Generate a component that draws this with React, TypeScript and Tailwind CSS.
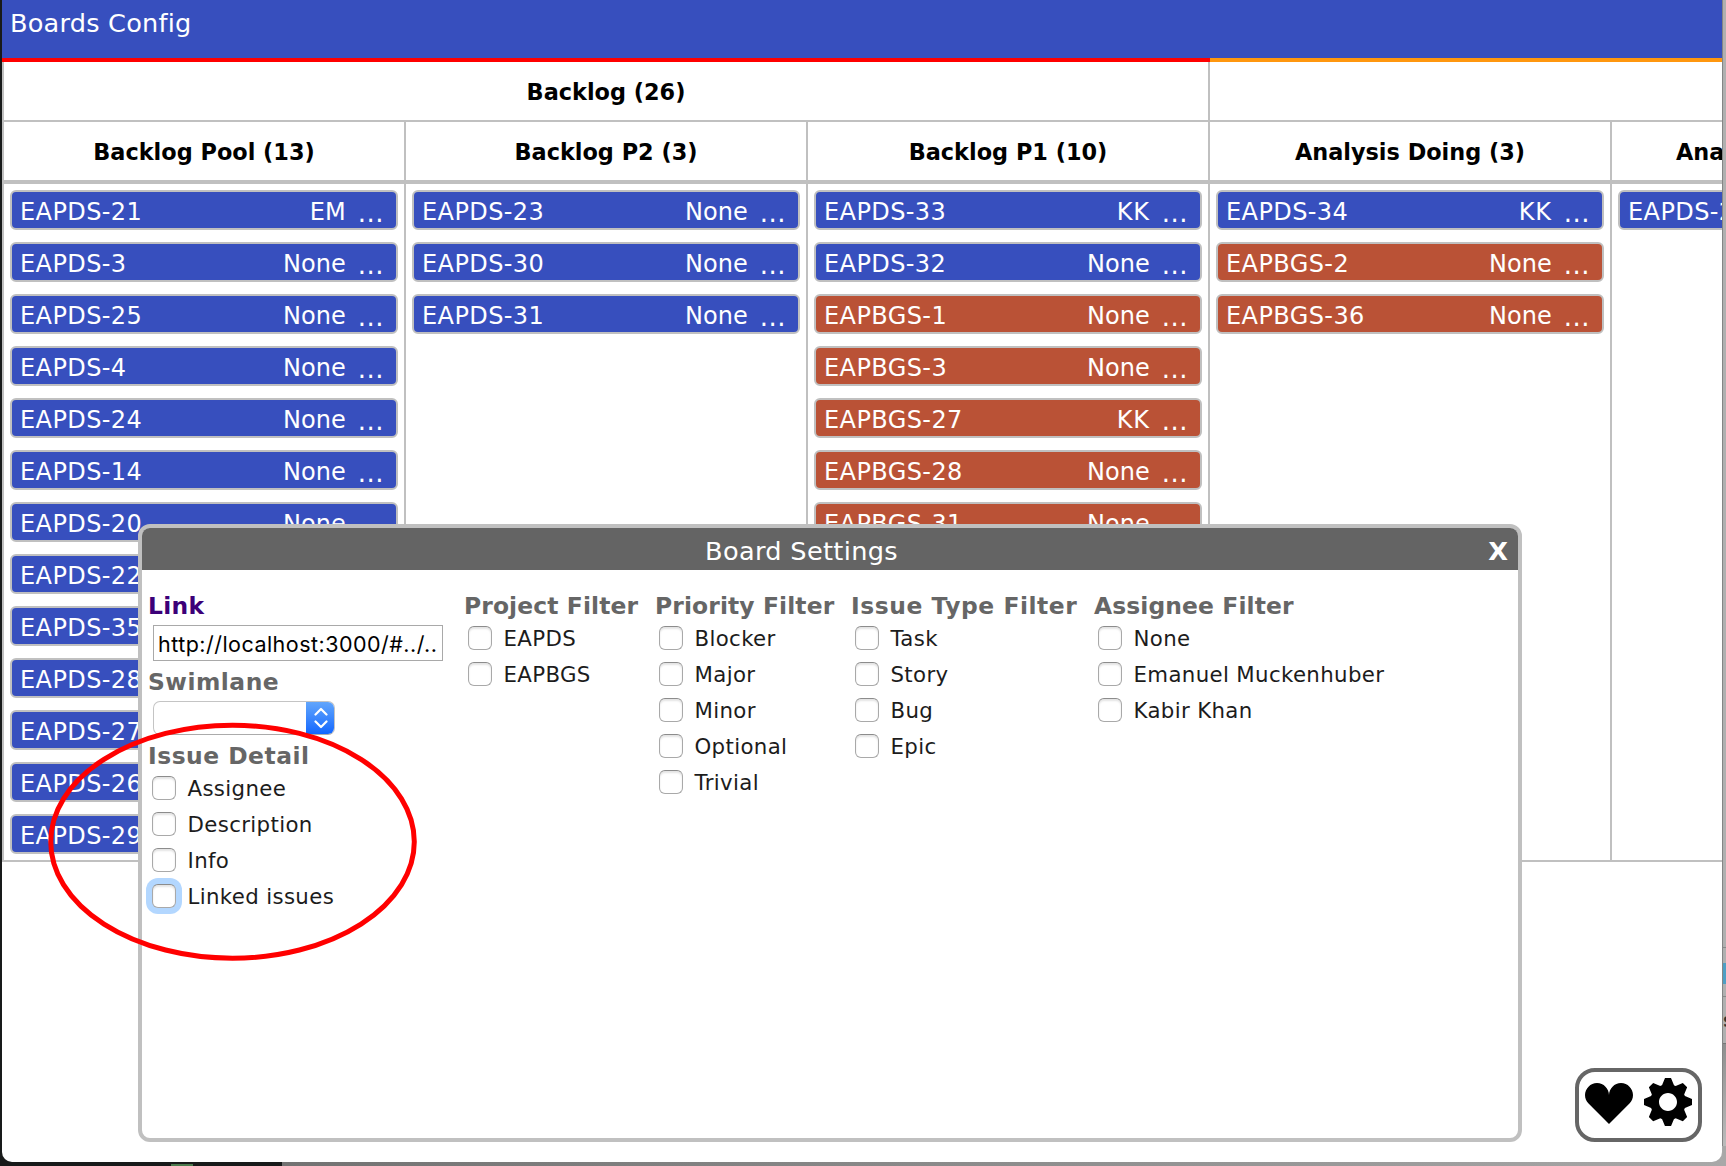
import React from "react";

type Card = { id: string; who: string };
type Column = { title: string; cards: Card[]; clipped?: boolean };

const list = (text: string): Card[] =>
  text.split(",").map((entry) => {
    const [id, who = "None"] = entry.trim().split(":");
    return { id, who };
  });

const columns: Column[] = [
  {
    title: "Backlog Pool (13)",
    cards: list(
      "EAPDS-21:EM,EAPDS-3,EAPDS-25,EAPDS-4,EAPDS-24,EAPDS-14,EAPDS-20,EAPDS-22,EAPDS-35,EAPDS-28,EAPDS-27,EAPDS-26,EAPDS-29",
    ),
  },
  { title: "Backlog P2 (3)", cards: list("EAPDS-23,EAPDS-30,EAPDS-31") },
  {
    title: "Backlog P1 (10)",
    cards: list("EAPDS-33:KK,EAPDS-32,EAPBGS-1,EAPBGS-3,EAPBGS-27:KK,EAPBGS-28,EAPBGS-31"),
  },
  { title: "Analysis Doing (3)", cards: list("EAPDS-34:KK,EAPBGS-2,EAPBGS-36") },
  { title: "Analysis", cards: list("EAPDS-2"), clipped: true },
];

function IssueCard({ id, who }: Card) {
  const color = id.startsWith("EAPBGS") ? "bg-[#ba5236]" : "bg-[#374fbe]";
  return (
    <div
      className={`${color} flex h-10 w-[388px] shrink-0 items-center rounded-[6px] border-2 border-[#c0c0c0] pt-[4px] pl-[8px] text-[24px] leading-[32px] text-white`}
    >
      <span className="tracking-[0.4px]">{id}</span>
      <span className={`ml-auto ${who === "KK" ? "tracking-[0.8px]" : ""}`}>{who}</span>
      <span className="mr-[12px] ml-[12px] pt-[2px] text-[26px] tracking-[0.5px]">...</span>
    </div>
  );
}

function BoardColumn({ title, cards, clipped }: Column) {
  return (
    <div className="flex w-[402px] shrink-0 flex-col border-r-2 border-[#c0c0c0]">
      <div
        className={`flex h-[62px] shrink-0 items-center border-b-4 border-[#c0c0c0] pt-[4px] text-[22.4px] font-bold ${
          clipped ? "pl-[64px]" : "justify-center"
        }`}
      >
        {title}
      </div>
      <div className="flex flex-col gap-3 pt-[6px] pl-[6px]">
        {cards.map((c) => (
          <IssueCard key={c.id} {...c} />
        ))}
      </div>
    </div>
  );
}

function Check({ label, focused }: { label: string; focused?: boolean }) {
  return (
    <label className="flex h-9 items-center gap-[11.5px]">
      <span
        className={`size-6 shrink-0 rounded-[6px] border-[1.5px] border-[#a9a9a9] border-t-[#8c8c8c] bg-white ${
          focused
            ? "shadow-[0_0_0_6px_#b3d7ff,inset_0_2px_2px_#e4e4e4]"
            : "shadow-[inset_0_2px_2px_#e4e4e4]"
        }`}
      />
      <span className="pt-[2px] text-[21.3px] leading-[30px] tracking-[0.35px] whitespace-nowrap text-[#1c1c1c]">
        {label}
      </span>
    </label>
  );
}

const headingClass = "-ml-px h-[30px] text-[23.4px] leading-[32px] font-bold whitespace-nowrap text-[#666]";

function Filter({
  title,
  items,
  className,
  wide,
}: {
  title: string;
  items: string[];
  className: string;
  wide?: boolean;
}) {
  return (
    <div className={`shrink-0 ${className}`}>
      <div className={`${headingClass} ${wide ? "tracking-[0.55px]" : "tracking-[0.12px]"}`}>{title}</div>
      <div className="pl-[3px]">
        {items.map((i) => (
          <Check key={i} label={i} />
        ))}
      </div>
    </div>
  );
}

function SettingsDialog() {
  return (
    <div className="absolute top-[524px] left-[136px] flex h-[618px] w-[1384px] flex-col overflow-hidden rounded-[12px] border-4 border-[#c0c0c0] bg-white">
      <div className="grid h-[42px] shrink-0 grid-cols-[1fr_auto_1fr] items-center bg-[#646464] pt-[4px] text-[25.6px] leading-[38px] text-white">
        <span />
        <span className="pr-[57px] tracking-[0.33px]">Board Settings</span>
        <span className="pr-[10px] text-right font-bold">X</span>
      </div>
      <div className="flex pt-[20px] pl-[7px]">
        <div className="w-[316px] shrink-0">
          <div className="-ml-px h-[30px] text-[23.4px] leading-[32px] font-bold tracking-[0.3px] text-[#3c0078]">Link</div>
          <div className="mt-[5px] ml-[4px] h-9 w-[290px] border border-[#a9a9a9] pl-[4px] font-['Inter',sans-serif] text-[21.5px] leading-[36px] tracking-[0.47px] whitespace-nowrap text-black">
            http://localhost:3000/#../..
          </div>
          <div className={`${headingClass} mt-[5px] tracking-[0.5px]`}>Swimlane</div>
          <div className="mt-[5px] ml-[4px] flex h-[34px] w-[182px] overflow-hidden rounded-[7px] border border-[#c4c4c4] border-b-[#ababab]">
            <div className="ml-auto -mt-px -mr-px flex h-[34px] w-[29px] items-center justify-center bg-linear-to-b from-[#64a7fb] to-[#0d63fe]">
              <svg width="14" height="22" viewBox="0 0 14 22" fill="none" stroke="white" strokeWidth="2.2" strokeLinecap="round" strokeLinejoin="round">
                <path d="M1.5 7.5 7 2l5.500 5.500M1.500 14.500 7 20l5.500-5.500" />
              </svg>
            </div>
          </div>
          <div className={`${headingClass} mt-[5px] tracking-[0.5px]`}>Issue Detail</div>
          <div className="pl-[3px]">
            <Check label="Assignee" />
            <Check label="Description" />
            <Check label="Info" />
            <Check label="Linked issues" focused />
          </div>
        </div>
        <Filter className="w-[191px]" title="Project Filter" items={["EAPDS", "EAPBGS"]} />
        <Filter className="w-[196px]" title="Priority Filter" items={["Blocker", "Major", "Minor", "Optional", "Trivial"]} />
        <Filter className="w-[243px]" title="Issue Type Filter" items={["Task", "Story", "Bug", "Epic"]} wide />
        <Filter className="w-[300px]" title="Assignee Filter" items={["None", "Emanuel Muckenhuber", "Kabir Khan"]} />
      </div>
    </div>
  );
}

function Tools() {
  return (
    <div className="absolute top-[1068px] left-[1573px] flex h-[74px] w-[127px] gap-[11px] rounded-[20px] border-4 border-[#666] bg-white pt-[6px] pl-[6px]">
      <svg width="48" height="48" viewBox="0 0 8 8">
        <path
          transform="translate(0 .85)"
          d="M2 0c-.55 0-1.040.23-1.410.59-.36.36-.59.85-.59 1.410 0 .55.23 1.040.59 1.410l3.410 3.410 3.410-3.410c.36-.36.59-.85.59-1.410 0-.55-.23-1.040-.59-1.410-.36-.36-.85-.59-1.410-.59-.55 0-1.040.23-1.410.59-.36.36-.59.85-.59 1.410 0-.55-.23-1.040-.59-1.410-.36-.36-.85-.59-1.410-.59z"
        />
      </svg>
      <svg width="48" height="48" viewBox="0 0 8 8">
        <path d="M3.5 0l-.5 1.190c-.1.03-.19.08-.28.13l-1.190-.5-.72.72.5 1.190c-.05.1-.09.18-.13.28l-1.190.5v1l1.190.5c.04.1.08.18.13.28l-.5 1.190.72.72 1.190-.5c.09.04.18.09.28.13l.5 1.190h1l.5-1.190c.09-.04.19-.08.28-.13l1.190.5.72-.72-.5-1.190c.04-.09.09-.19.13-.28l1.190-.5v-1l-1.190-.5c-.03-.09-.08-.19-.13-.28l.5-1.190-.72-.72-1.190.5c-.09-.04-.19-.09-.28-.13l-.5-1.190h-1zm.5 2.5c.83 0 1.500.67 1.500 1.500s-.67 1.500-1.500 1.500-1.500-.67-1.500-1.500.67-1.500 1.500-1.500z" />
      </svg>
    </div>
  );
}

export default function App() {
  return (
    <div className="relative flex h-[1166px] w-[1726px] flex-col overflow-hidden bg-[#181a1a] font-['DejaVu_Sans',sans-serif] text-black">
      <div className="flex h-[1162px] shrink-0">
        <div className="w-[2px] shrink-0" />
        <div className="relative z-10 flex w-[1720px] shrink-0 flex-col overflow-hidden rounded-b-[10px] bg-white">
          <div className="h-[58px] shrink-0 bg-[#374fbe] pl-[8px] text-[25.6px] leading-[46px] tracking-[0.2px] text-white">
            Boards Config
          </div>
          <div className="flex h-[804px] shrink-0 flex-col border-b-2 border-l-2 border-[#c0c0c0]">
            <div className="-ml-[2px] flex h-1 shrink-0">
              <div className="w-[1208px] bg-[#ff0000]" />
              <div className="flex-1 bg-[#ff970f]" />
            </div>
            <div className="flex h-[60px] shrink-0 border-b-2 border-[#c0c0c0] text-[22.4px] font-bold">
              <div className="flex w-[1206px] items-center justify-center border-r-2 border-[#c0c0c0] pt-[4px]">
                Backlog (26)
              </div>
            </div>
            <div className="flex min-h-0 flex-1">
              {columns.map((c) => (
                <BoardColumn key={c.title} {...c} />
              ))}
            </div>
          </div>
          <SettingsDialog />
          <Tools />
        </div>
        <div className="flex flex-1 flex-col border-l border-[#858585] bg-[#b0b0b0]">
          <div className="h-[948px] border-b border-[#8a8a8a]" />
          <div className="mt-[15px] h-[21px] bg-[#4f9fc4]" />
          <div className="h-[13px] border-b border-[#8a8a8a]" />
          <div className="flex h-[47px] items-center overflow-hidden border-b border-[#777] text-[20px] font-bold text-[#333]">
            s
          </div>
          <div className="flex-1 bg-linear-to-b from-[#8f8f8f] to-[#c2c2c2]" />
        </div>
      </div>
      <div className="absolute bottom-0 left-[282px] flex h-5 w-[1444px] bg-linear-to-r from-[#727272] to-[#a8a8a8]" />
      <div className="absolute bottom-0 left-[171px] h-[2px] w-[22px] bg-[#4b7a4d]" />
      <svg className="absolute top-[718px] left-[44px] z-20" width="380" height="248" viewBox="0 0 380 248" fill="none">
        <ellipse cx="188.500" cy="123.700" rx="181.800" ry="116.500" stroke="#ff0000" strokeWidth="5" />
      </svg>
    </div>
  );
}
